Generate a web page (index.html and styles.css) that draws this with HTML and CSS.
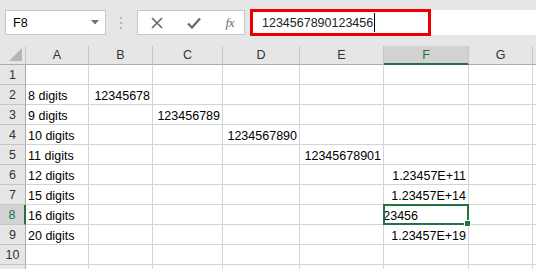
FILE: index.html
```html
<!DOCTYPE html>
<html lang="en">
<head>
    <meta charset="UTF-8">
    <title>Digits</title>
    <link rel="stylesheet" href="styles.css">
</head>
<body>
    <div class="toolbar">
        <div class="namebox">
            <span>F8</span>
            <svg class="drop" width="8" height="5" viewBox="0 0 8 5"><path d="M0 0H8L4 4.5Z" fill="#707070"/></svg>
        </div>
        <div class="grip">
            <svg width="3" height="12" viewBox="0 0 3 12"><rect x="0" y="0" width="2" height="2" fill="#b3b3b3"/><rect x="0" y="5" width="2" height="2" fill="#b3b3b3"/><rect x="0" y="10" width="2" height="2" fill="#b3b3b3"/></svg>
        </div>
        <div class="fbuttons">
            <svg width="12" height="12" viewBox="0 0 12 12"><path d="M1 1L11 11M11 1L1 11" stroke="#6a6a6a" stroke-width="1.7"/></svg>
            <svg width="14" height="12" viewBox="0 0 14 12"><path d="M1 6.5L5 10.5L13 1.5" fill="none" stroke="#6a6a6a" stroke-width="2.3"/></svg>
            <span class="fx">fx</span>
        </div>
        <div class="formula">
            <div class="mark">1234567890123456<span class="caret"></span></div>
        </div>
    </div>

    <div class="sheet">
        <div class="hd corner"><svg width="13" height="13" viewBox="0 0 13 13"><path d="M13 0V13H0Z" fill="#b5b5b5"/></svg></div>
        <div class="hd col">A</div>
        <div class="hd col">B</div>
        <div class="hd col">C</div>
        <div class="hd col">D</div>
        <div class="hd col">E</div>
        <div class="hd col active">F</div>
        <div class="hd col">G</div>
        <div class="hd col"></div>

        <div class="hd row">1</div>
        <div class="c"></div><div class="c"></div><div class="c"></div><div class="c"></div><div class="c"></div><div class="c"></div><div class="c"></div><div class="c"></div>

        <div class="hd row">2</div>
        <div class="c">8 digits</div><div class="c num">12345678</div><div class="c"></div><div class="c"></div><div class="c"></div><div class="c"></div><div class="c"></div><div class="c"></div>

        <div class="hd row">3</div>
        <div class="c">9 digits</div><div class="c"></div><div class="c num">123456789</div><div class="c"></div><div class="c"></div><div class="c"></div><div class="c"></div><div class="c"></div>

        <div class="hd row">4</div>
        <div class="c">10 digits</div><div class="c"></div><div class="c"></div><div class="c num">1234567890</div><div class="c"></div><div class="c"></div><div class="c"></div><div class="c"></div>

        <div class="hd row">5</div>
        <div class="c">11 digits</div><div class="c"></div><div class="c"></div><div class="c"></div><div class="c num">12345678901</div><div class="c"></div><div class="c"></div><div class="c"></div>

        <div class="hd row">6</div>
        <div class="c">12 digits</div><div class="c"></div><div class="c"></div><div class="c"></div><div class="c"></div><div class="c num">1.23457E+11</div><div class="c"></div><div class="c"></div>

        <div class="hd row">7</div>
        <div class="c">15 digits</div><div class="c"></div><div class="c"></div><div class="c"></div><div class="c"></div><div class="c num">1.23457E+14</div><div class="c"></div><div class="c"></div>

        <div class="hd row active">8</div>
        <div class="c">16 digits</div><div class="c"></div><div class="c"></div><div class="c"></div><div class="c"></div><div class="c sel"><div class="clip">1234567890123456</div></div><div class="c"></div><div class="c"></div>

        <div class="hd row">9</div>
        <div class="c">20 digits</div><div class="c"></div><div class="c"></div><div class="c"></div><div class="c"></div><div class="c num">1.23457E+19</div><div class="c"></div><div class="c"></div>

        <div class="hd row">10</div>
        <div class="c"></div><div class="c"></div><div class="c"></div><div class="c"></div><div class="c"></div><div class="c"></div><div class="c"></div><div class="c"></div>

        <div class="hd row"></div>
        <div class="c"></div><div class="c"></div><div class="c"></div><div class="c"></div><div class="c"></div><div class="c"></div><div class="c"></div><div class="c"></div>
    </div>
</body>
</html>
```

FILE: styles.css
```css
html, body {
    margin: 0;
    height: 100%;
    overflow: hidden;
}
body {
    font-family: "Liberation Sans", Arial, sans-serif;
    font-size: 12.5px;
    color: #000;
    background: #e6e6e6;
}
.toolbar {
    display: flex;
    align-items: stretch;
    height: 25px;
    padding: 10px 0 11px 0;
}
.namebox {
    box-sizing: border-box;
    width: 101px;
    margin-left: 5px;
    background: #fff;
    border: 1px solid #c6c6c6;
    display: flex;
    align-items: center;
    justify-content: space-between;
    padding: 0 6px 0 7px;
}
.grip {
    width: 31px;
    display: flex;
    align-items: center;
    justify-content: center;
}
.fbuttons {
    box-sizing: border-box;
    width: 108px;
    background: #fff;
    border: 1px solid #c6c6c6;
    display: flex;
    align-items: center;
    padding: 0 10px 0 13px;
    justify-content: space-between;
}
.fx {
    font-family: "Liberation Serif", serif;
    font-style: italic;
    font-size: 13px;
    color: #6a6a6a;
    letter-spacing: -0.5px;
}
.formula {
    flex: 1;
    margin-left: 5px;
    background: #fff;
    display: flex;
}
.mark {
    box-sizing: border-box;
    width: 181px;
    height: 27px;
    margin-top: -1px;
    border: 3px solid #ee0000;
    padding-left: 9px;
    display: flex;
    align-items: center;
    color: #222;
}
.caret {
    display: inline-block;
    width: 1px;
    height: 19px;
    background: #000;
    margin-left: 1px;
}
.sheet {
    display: grid;
    grid-template-columns: 26px 63px 64px 70px 77px 84px 85px 64px 1fr;
    grid-template-rows: 19px;
    grid-auto-rows: 20px;
    background: #fff;
}
.hd {
    box-sizing: border-box;
    background: #e6e6e6;
    color: #333;
    display: flex;
    align-items: center;
    justify-content: center;
    line-height: 18px;
}
.corner {
    border-right: 1px solid #c6c6c6;
    border-bottom: 1px solid #ababab;
    align-items: flex-end;
    justify-content: flex-end;
    padding: 0 3px 3px 0;
}
.col {
    border-right: 1px solid #c6c6c6;
    border-bottom: 1px solid #ababab;
}
.col.active {
    background: #d2d2d2;
    color: #217346;
    border-bottom: 2px solid #217346;
}
.row {
    border-right: 1px solid #ababab;
    border-bottom: 1px solid #c6c6c6;
}
.row.active {
    background: #d2d2d2;
    color: #217346;
    border-right: 2px solid #217346;
}
.c {
    box-sizing: border-box;
    border-right: 1px solid #d4d4d4;
    border-bottom: 1px solid #d4d4d4;
    display: flex;
    align-items: flex-end;
    line-height: 14px;
    padding: 0 2px 1px 2px;
    white-space: nowrap;
}
.c.num {
    justify-content: flex-end;
}
.c.sel {
    position: relative;
    padding-left: 0;
}
.c.sel::after {
    content: "";
    position: absolute;
    left: -1px;
    top: -1px;
    right: -1px;
    bottom: -1px;
    border: 2px solid #217346;
}
.c.sel::before {
    content: "";
    position: absolute;
    right: -3px;
    bottom: -3px;
    width: 5px;
    height: 5px;
    background: #217346;
    border: 1px solid #fff;
    z-index: 1;
}
.clip {
    width: 34px;
    overflow: hidden;
    display: flex;
    justify-content: flex-end;
}
```
